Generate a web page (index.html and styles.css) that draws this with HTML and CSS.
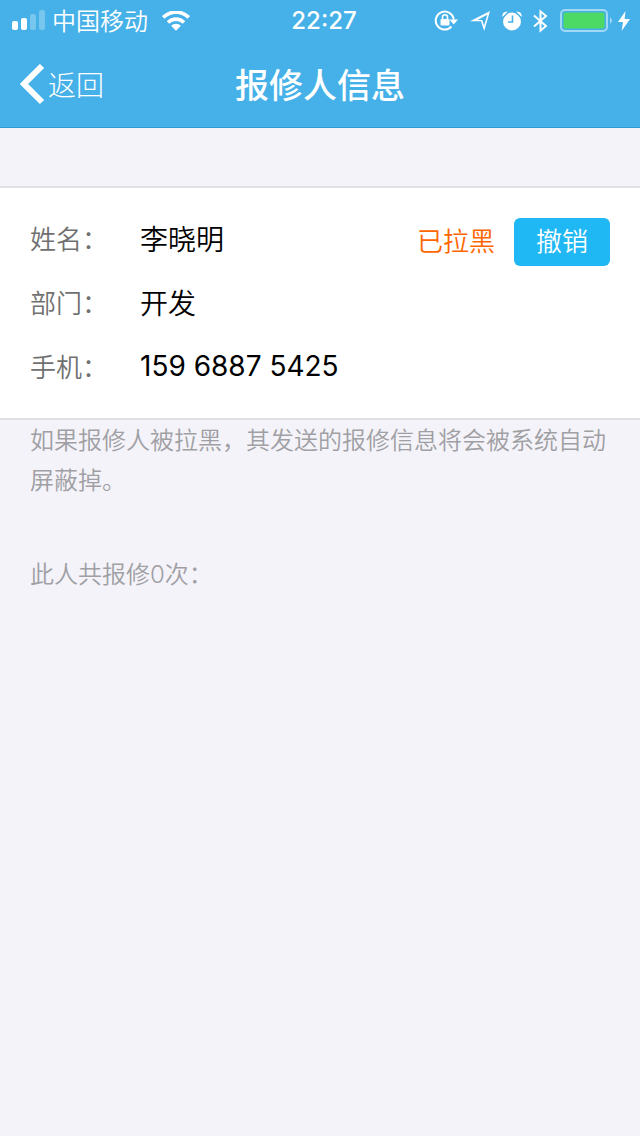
FILE: index.html
```html
<!DOCTYPE html>
<html lang="zh-CN">
<head>
<meta charset="utf-8">
<meta name="viewport" content="width=device-width, initial-scale=1">
<title>报修人信息</title>
<link rel="stylesheet" href="styles.css">
</head>
<body>
<header class="top">
  <div class="status">
    <div class="status-left">
      <svg class="signal" width="34" height="22" viewBox="0 0 34 22" fill="#fff" aria-hidden="true">
        <rect x="0" y="11" width="6" height="9" rx="2"/>
        <rect x="9" y="8" width="6" height="12" rx="2"/>
        <rect x="18" y="4" width="6" height="16" rx="2" opacity=".27"/>
        <rect x="27" y="0" width="6" height="20" rx="2" opacity=".27"/>
      </svg>
      <span class="carrier">中国移动</span>
      <svg class="wifi" width="28" height="20" viewBox="0 0 28 20" aria-hidden="true">
        <path d="M1.2 6.400a18.1 18.1 0 0 1 25.600 0M6 11.400a11.3 11.3 0 0 1 16 0" fill="none" stroke="#fff" stroke-width="3.600"/>
        <path d="M9 14.800a7.1 7.1 0 0 1 10 0l-5 4.900z" fill="#fff"/>
      </svg>
    </div>
    <time class="clock">22:27</time>
    <div class="status-right">
      <svg class="lock" width="24" height="22" viewBox="0 0 24 22" aria-hidden="true">
        <path d="M17.500 16.500A9 9 0 1 1 19.700 9.500" fill="none" stroke="#fff" stroke-width="2"/>
        <path d="M15.500 9.600H24l-4.300 5z" fill="#fff"/>
        <rect x="6.500" y="9" width="9" height="6.500" rx="1" fill="#fff"/>
        <path d="M8.500 9.500V7.200a2.500 2.500 0 0 1 5 0v2.300" fill="none" stroke="#fff" stroke-width="1.600"/>
      </svg>
      <svg class="arrow" width="20" height="20" viewBox="0 0 20 20" aria-hidden="true">
        <path fill="#fff" fill-rule="evenodd" d="M0 10.200 20 0 14.200 20 11 10.200zM7.500 8.900l4.700.1 1.900 5.700L17.300 3.800z"/>
      </svg>
      <svg class="alarm" width="20" height="20" viewBox="0 0 20 20" aria-hidden="true">
        <circle cx="10" cy="10.500" r="9" fill="#fff"/>
        <path d="M.2 5.200A5 5 0 0 1 4.900.5L6 1.200.9 6zM15.100.5a5 5 0 0 1 4.700 4.700l-.7.8L14 1.200z" fill="#fff"/>
        <path d="M.9 6.500 6.200 1.100M19.100 6.500l-5.300-5.400" fill="none" stroke="#45b1e8" stroke-width="1.300"/>
        <path d="M10.500 4.500v6.500H6" fill="none" stroke="#45b1e8" stroke-width="1.600"/>
      </svg>
      <svg class="bluetooth" width="15" height="24" viewBox="0 0 15 24" fill="none" stroke="#fff" stroke-width="2" aria-hidden="true">
        <path d="M1 6.500 13 17 7.500 21.700V2.300L13 7 1 17.500"/>
      </svg>
      <svg class="battery" width="53" height="24" viewBox="0 0 53 24" aria-hidden="true">
        <rect x="1" y="1" width="46" height="21" rx="4" fill="none" stroke="#a2d8f4" stroke-width="2"/>
        <rect x="3" y="3" width="42" height="17" rx="2" fill="#4cd964" stroke="#45b1e8"/>
        <path d="M50 8q4 3.500 0 7z" fill="#a2d8f4"/>
      </svg>
      <svg class="bolt" width="12" height="20" viewBox="0 0 12 20" fill="#fff" aria-hidden="true">
        <path d="M7.500 0 0 11h5L3.600 20 12 8H6.600z"/>
      </svg>
    </div>
  </div>
  <nav class="nav">
    <button class="back" type="button">
      <svg width="26" height="42" viewBox="0 0 26 42" fill="none" stroke="#fff" stroke-width="6" aria-hidden="true">
        <path d="M22 2 4 20l18 18"/>
      </svg>
      <span>返回</span>
    </button>
    <h1 class="title">报修人信息</h1>
  </nav>
</header>
<main>
  <section class="card">
    <dl class="info">
      <div class="row"><dt>姓名：</dt><dd>李晓明</dd></div>
      <div class="row"><dt>部门：</dt><dd>开发</dd></div>
      <div class="row"><dt>手机：</dt><dd class="phone">159 6887 5425</dd></div>
    </dl>
    <div class="actions">
      <span class="flag">已拉黑</span>
      <button class="undo" type="button">撤销</button>
    </div>
  </section>
  <p class="note">如果报修人被拉黑，其发送的报修信息将会被系统自动屏蔽掉。</p>
  <p class="note count">此人共报修0次：</p>
</main>
</body>
</html>
```
FILE: styles.css
```css
* {
  box-sizing: border-box;
}

body {
  margin: 0;
  min-height: 100vh;
  background: #f4f3f9;
  color: #000;
  font-family: Inter, "Noto Sans CJK SC", sans-serif;
  font-weight: 350;
}

button {
  border: 0;
  padding: 0;
  font: inherit;
  color: #fff;
  cursor: pointer;
}

svg {
  display: block;
  flex: none;
}

.top {
  background: #45b1e8;
  border-bottom: 1px solid #2c9bd1;
  color: #fff;
}

.status,
.nav {
  display: grid;
  grid-template-columns: 1fr auto 1fr;
  align-items: center;
}

.status {
  height: 42px;
  padding: 0 10px 0 12px;
}

.status-left,
.status-right {
  display: flex;
  align-items: center;
}

.status-right {
  justify-content: flex-end;
}

.carrier {
  margin: 0 14px 0 6px;
  padding-top: 2px;
  font-size: 24px;
  line-height: 40px;
}

.clock {
  margin-right: -6px;
  font-size: 24px;
  line-height: 40px;
  font-weight: 500;
}

.lock {
  margin-right: 12px;
}

.arrow {
  margin-right: 12px;
}

.alarm {
  margin-right: 11px;
}

.bluetooth {
  margin-right: 12px;
}

.battery {
  margin-right: 5px;
}

.nav {
  height: 85px;
  padding: 0 20px;
}

.back {
  display: flex;
  align-items: center;
  justify-self: start;
  gap: 2px;
  background: none;
  font-size: 28px;
  font-weight: 300;
  line-height: 40px;
}

.back span {
  padding-top: 2px;
}

.title {
  margin: 0;
  padding-top: 2px;
  font-size: 34px;
  line-height: 48px;
  font-weight: 500;
}

.card {
  display: flex;
  justify-content: space-between;
  align-items: flex-start;
  margin-top: 58px;
  padding: 18px 30px 20px;
  background: #fff;
  border: solid #e0e0e0;
  border-width: 2px 0;
}

.info {
  margin: 0;
}

.row {
  display: flex;
  align-items: center;
  height: 64px;
}

.row dt {
  width: 110px;
  padding-bottom: 2px;
  color: #707070;
  font-size: 26px;
}

.row dd {
  margin: 0;
  font-size: 28px;
}

.row .phone {
  font-weight: 400;
}

.actions {
  display: flex;
  align-items: center;
  gap: 19px;
  margin-top: 12px;
  font-size: 26px;
  line-height: 40px;
}

.flag {
  color: #ff6600;
}

.undo {
  width: 96px;
  height: 48px;
  border-radius: 6px;
  background: #1fb8f4;
}

.note {
  margin: 0;
  padding: 1px 20px 0 30px;
  color: #9f9fa4;
  font-size: 24px;
  line-height: 40px;
}

.count {
  margin-top: 53px;
}
```
